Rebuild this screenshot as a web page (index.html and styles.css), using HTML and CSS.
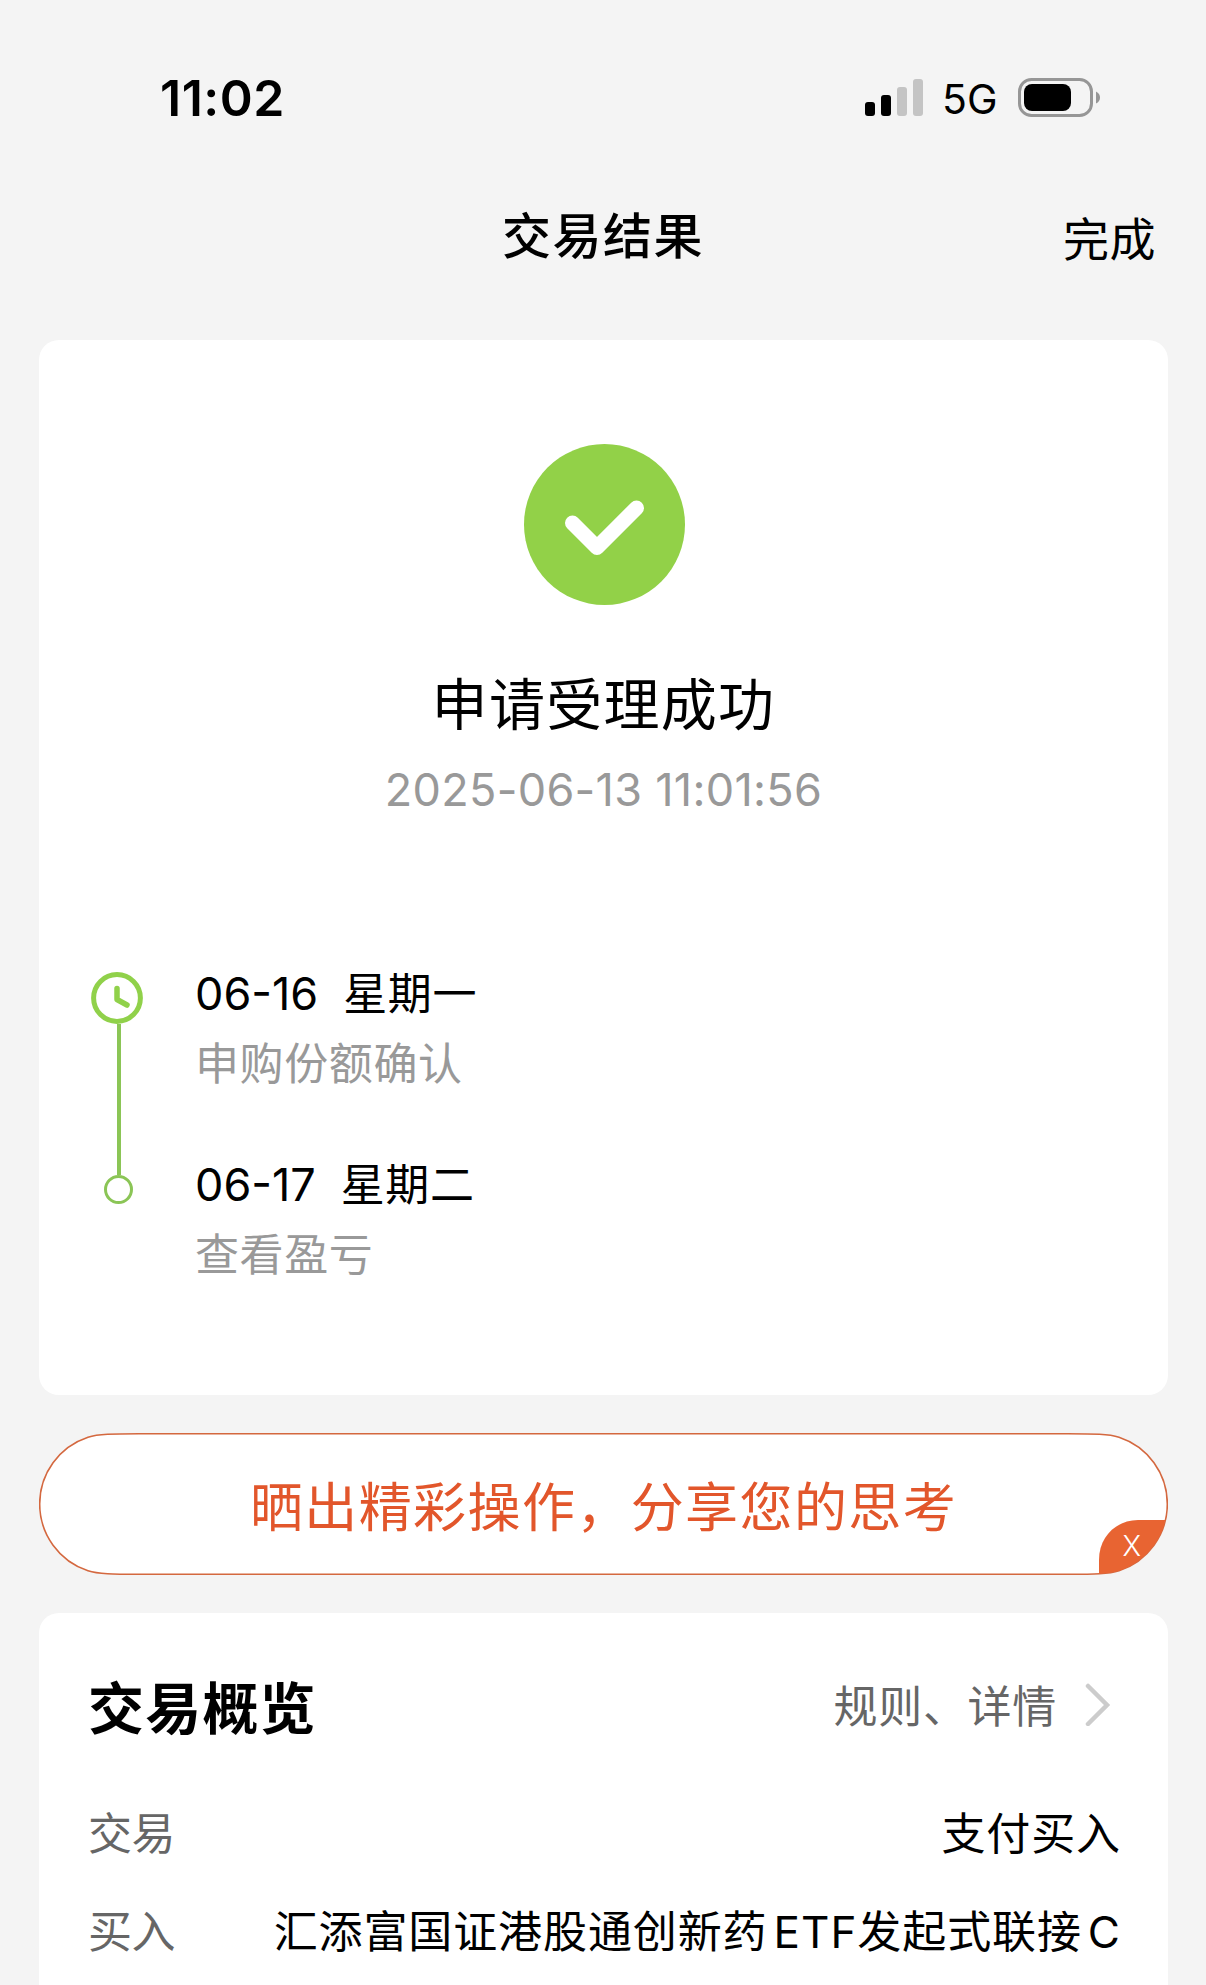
FILE: index.html
```html
<!DOCTYPE html>
<html lang="zh-CN">
<head>
    <meta charset="UTF-8">
    <meta name="viewport" content="width=device-width, initial-scale=1.0">
    <title>交易结果</title>
    <link rel="stylesheet" href="styles.css">
</head>
<body>

<!-- Status Bar -->
<div class="status-bar">
    <span class="time">11:02</span>
    <div class="status-icons">
        <svg class="signal" width="58" height="38" viewBox="0 0 58 38">
            <rect x="0" y="23" width="10" height="14" rx="3"/>
            <rect x="16" y="16" width="10" height="21" rx="3"/>
            <rect x="32" y="8" width="10" height="29" rx="3" fill="#c4c4c4"/>
            <rect x="48" y="0" width="10" height="37" rx="3" fill="#c4c4c4"/>
        </svg>
        <span class="network">5G</span>
        <svg class="battery" width="83" height="39" viewBox="0 0 83 39">
            <rect x="1.5" y="1.5" width="72" height="36" rx="12" fill="none" stroke="#969696" stroke-width="3"/>
            <rect x="6" y="6" width="47" height="27" rx="8"/>
            <path d="M78 13.5Q82 15.5 82 19.5T78 25.5z" fill="#969696"/>
        </svg>
    </div>
</div>

<header>
    <h1>交易结果</h1>
    <a class="done">完成</a>
</header>

<main>
    <!-- Result Section -->
    <div class="card result">
        <svg class="success-icon" width="163" height="161" viewBox="-2 0 163 161">
            <circle cx="80.5" cy="80.5" r="80.5" fill="#92d148"/>
            <path d="M48.5 79L73 103.5L112.5 64" fill="none" stroke="#fff" stroke-width="15" stroke-linecap="round" stroke-linejoin="round"/>
        </svg>
        <h2>申请受理成功</h2>
        <p class="result-time">2025-06-13 11:01:56</p>

        <div class="timeline">
            <div class="track">
                <svg width="52" height="52" viewBox="0 0 52 52" fill="none" stroke="#90d14a">
                    <circle cx="26" cy="26" r="23.4" stroke-width="5"/>
                    <path d="M26 16.5V27.5L36 33" stroke-width="5.5" stroke-linecap="round" stroke-linejoin="round"/>
                </svg>
                <div class="line"></div>
                <div class="dot"></div>
            </div>
            <div class="steps">
                <div class="step">
                    <p class="date"><span>06-16</span>星期一</p>
                    <p class="desc">申购份额确认</p>
                </div>
                <div class="step">
                    <p class="date"><span>06-17</span>星期二</p>
                    <p class="desc">查看盈亏</p>
                </div>
            </div>
        </div>
    </div>

    <!-- Share Banner -->
    <div class="banner">
        <svg class="banner-shape" width="1129" height="142" viewBox="0 0 1129 142">
            <defs>
                <clipPath id="pill">
                    <path d="M100 .8C74 .8 59 1 49 4.3A70.2 70.2 0 0 0 49 137.7C59 141 74 141.2 100 141.2H1029C1055 141.2 1070 141 1080 137.7A70.2 70.2 0 0 0 1080 4.3C1070 1 1055 .8 1029 .8z"/>
                </clipPath>
            </defs>
            <path d="M100 .8C74 .8 59 1 49 4.3A70.2 70.2 0 0 0 49 137.7C59 141 74 141.2 100 141.2H1029C1055 141.2 1070 141 1080 137.7A70.2 70.2 0 0 0 1080 4.3C1070 1 1055 .8 1029 .8z" fill="#fff" stroke="#d4683f" stroke-width="1.6"/>
            <path d="M1060 142V127C1060 103 1078 87 1099 87H1130V142z" fill="#e86432" clip-path="url(#pill)"/>
        </svg>
        <span class="banner-text">晒出精彩操作，分享您的思考</span>
        <span class="close">X</span>
    </div>

    <!-- Overview Section -->
    <div class="card overview">
        <div class="overview-head">
            <h3>交易概览</h3>
            <a class="rules">规则、详情
                <svg width="26" height="44" viewBox="0 0 26 44" fill="none" stroke="#ccc" stroke-width="4.5" stroke-linecap="round">
                    <path d="M3 4L22 23L3 42"/>
                </svg>
            </a>
        </div>
        <div class="row">
            <span class="label">交易</span>
            <span class="value">支付买入</span>
        </div>
        <div class="row">
            <span class="label">买入</span>
            <span class="value">汇添富国证港股通创新药<span class="latin">ETF</span>发起式联接<span class="latin">C</span></span>
        </div>
    </div>
</main>

</body>
</html>
```
FILE: styles.css
```css
* {
    box-sizing: border-box;
}
body {
    font-family: Inter, "Noto Sans CJK SC", sans-serif;
    background-color: #f4f4f4;
    color: #000;
    margin: 0;
    height: 1985px;
    overflow: hidden;
}
h1, h2, h3, p {
    margin: 0;
    font-weight: 400;
}
svg {
    display: block;
    flex: none;
}
.status-bar {
    display: flex;
    justify-content: space-between;
    align-items: center;
    height: 196px;
    padding: 0 105px 0 160px;
}
.time {
    font-size: 50px;
    font-weight: 600;
    letter-spacing: 0.5px;
}
.status-icons {
    display: flex;
    align-items: center;
    padding-bottom: 1px;
}
.network {
    width: 57px;
    font-size: 41px;
    font-weight: 400;
    line-height: 40px;
    margin: 2px 19px 0 19px;
}
header {
    display: grid;
    grid-template-columns: 1fr auto 1fr;
    align-items: center;
    height: 144px;
    padding: 0 50px 74px;
}
h1 {
    grid-column: 2;
    font-size: 49px;
    font-weight: 500;
    letter-spacing: 1.5px;
}
.done {
    justify-self: end;
    font-size: 46px;
    letter-spacing: 0.5px;
    padding-top: 7px;
}
main {
    padding: 0 38px 0 39px;
}
.card {
    background-color: #fff;
    border-radius: 20px;
}
.result {
    display: flex;
    flex-direction: column;
    align-items: center;
    height: 1055px;
    padding-top: 104px;
}
h2 {
    font-size: 56px;
    line-height: 80px;
    letter-spacing: 1.3px;
    margin-top: 60px;
}
.result-time {
    font-size: 45px;
    line-height: 60px;
    letter-spacing: 0.3px;
    color: #999;
    margin-top: 15px;
}
.timeline {
    align-self: stretch;
    display: flex;
    margin-top: 144px;
    padding-left: 52px;
}
.track {
    display: flex;
    flex-direction: column;
    align-items: center;
    width: 52px;
    padding-top: 8px;
}
.line {
    width: 4px;
    height: 151px;
    margin-left: 3px;
    background-color: #8bc556;
}
.dot {
    width: 29px;
    height: 29px;
    margin-left: 3px;
    border: 3px solid #8bc556;
    border-radius: 50%;
}
.steps {
    margin-left: 52px;
}
.step {
    height: 191px;
    font-size: 44px;
    line-height: 60px;
    letter-spacing: 0.6px;
}
.date span {
    font-size: 45px;
    letter-spacing: 0;
    margin-right: 25px;
}
.desc {
    color: #999;
    margin-top: 10px;
}
.banner {
    position: relative;
    display: flex;
    justify-content: center;
    align-items: center;
    height: 142px;
    margin: 38px 0;
}
.banner-shape {
    position: absolute;
    top: 0;
    left: 0;
}
.banner-text {
    position: relative;
    font-size: 53px;
    letter-spacing: 1.4px;
    color: #e2562b;
}
.close {
    position: absolute;
    right: 27px;
    bottom: 14px;
    font-size: 28px;
    font-weight: 300;
    line-height: 30px;
    color: #fff;
}
.overview {
    height: 400px;
    padding: 42px 47px 0 49px;
}
.overview-head, .row {
    display: flex;
    justify-content: space-between;
    align-items: center;
}
.overview-head {
    height: 98px;
    margin-bottom: 29px;
}
h3 {
    font-size: 56px;
    font-weight: 700;
    letter-spacing: 1.2px;
}
.rules {
    display: flex;
    align-items: center;
    gap: 28px;
    padding-right: 10px;
    font-size: 44px;
    letter-spacing: 0.7px;
    color: #666;
}
.row {
    height: 98px;
    font-size: 44px;
    letter-spacing: 0.9px;
}
.label {
    color: #666;
    letter-spacing: -0.5px;
}
.latin {
    letter-spacing: 1px;
    padding-left: 6px;
}
```
